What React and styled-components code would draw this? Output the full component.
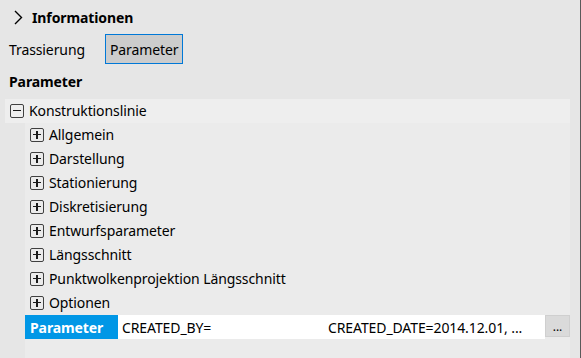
import React from 'react';
import styled, { createGlobalStyle } from 'styled-components';

const Global = createGlobalStyle`
  html, body { margin: 0; padding: 0; }
  body {
    background: #e6e6e6;
    font-family: "Noto Sans", "Open Sans", sans-serif;
    color: #000;
    letter-spacing: -0.1px;
  }
`;

const Page = styled.div`
  box-sizing: border-box;
  width: 581px;
  height: 358px;
  overflow: hidden;
  border-right: 1px solid #5a5a5a;
  display: flex;
  flex-direction: column;
`;

const Header = styled.div`
  height: 34px;
  display: flex;
  align-items: center;
  padding-left: 14px;
  gap: 9px;
  font-weight: bold;
  font-size: 14px;
`;

const Tabs = styled.div`
  height: 30px;
  display: flex;
  align-items: center;
  padding-left: 9px;
  gap: 20px;
  font-size: 14px;
`;

const Tab = styled.div`
  box-sizing: border-box;
  height: 30px;
  display: flex;
  align-items: center;
  padding: 0 ${p => (p.$active ? 4 : 0)}px;
  background: ${p => (p.$active ? '#cccccc' : 'transparent')};
  border: ${p => (p.$active ? '1px solid #0078d7' : 'none')};
`;

const Heading = styled.div`
  height: 35px;
  display: flex;
  align-items: center;
  padding-left: 9px;
  font-weight: bold;
  font-size: 14px;
`;

const Tree = styled.div`
  margin-left: 5px;
  width: 565px;
  flex: 1;
  display: flex;
  flex-direction: column;
  font-size: 14px;
`;

const Row = styled.div`
  height: 24px;
  display: flex;
  align-items: center;
  padding-left: 5px;
  gap: 5px;
  background: ${p => p.$bg || 'transparent'};
  white-space: nowrap;
  line-height: 1;
  padding-bottom: 1px;
  box-sizing: border-box;
`;

const Children = styled.div`
  margin-left: 20px;
  flex: 1;
  background: #ebebeb;
  display: flex;
  flex-direction: column;
`;

const Box = styled.span`
  box-sizing: border-box;
  width: 14px;
  height: 14px;
  border: 1px solid #404040;
  border-radius: 2px;
  position: relative;
  flex: none;
  &::before {
    content: '';
    position: absolute;
    left: 2px;
    right: 2px;
    top: 5px;
    height: 1.5px;
    background: #1a1a1a;
  }
  &::after {
    content: '';
    display: ${p => (p.$open ? 'none' : 'block')};
    position: absolute;
    top: 2px;
    bottom: 2px;
    left: 5px;
    width: 1.5px;
    background: #1a1a1a;
  }
`;

const PropRow = styled.div`
  height: 24px;
  display: flex;
  white-space: nowrap;
`;

const PropLabel = styled.div`
  width: 93px;
  background: #0097e6;
  color: #fff;
  font-weight: bold;
  display: flex;
  align-items: center;
  padding-left: 5px;
  box-sizing: border-box;
`;

const PropValue = styled.div`
  width: 427px;
  background: #fff;
  display: flex;
  align-items: center;
  padding-left: 4px;
  box-sizing: border-box;
  overflow: hidden;
`;

const ValuePart = styled.span`
  width: ${p => p.$w}px;
  flex: none;
`;

const DotsButton = styled.div`
  box-sizing: border-box;
  width: 25px;
  height: 22px;
  background: #dadada;
  border: 1px solid #cfcfcf;
  display: flex;
  align-items: center;
  justify-content: center;
  font-size: 12px;
`;

const Chevron = () => (
  <svg width="9" height="15" viewBox="0 0 9 15">
    <path d="M1 1 L7.5 7.5 L1 14" fill="none" stroke="#000" strokeWidth="1.4" />
  </svg>
);

const groups = [
  'Allgemein',
  'Darstellung',
  'Stationierung',
  'Diskretisierung',
  'Entwurfsparameter',
  'Längsschnitt',
  'Punktwolkenprojektion Längsschnitt',
  'Optionen',
];

export default function App() {
  return (
    <Page>
      <Global />
      <Header>
        <Chevron />
        Informationen
      </Header>
      <Tabs>
        <Tab>Trassierung</Tab>
        <Tab $active>Parameter</Tab>
      </Tabs>
      <Heading>Parameter</Heading>
      <Tree>
        <Row $bg="#eeeeee">
          <Box $open />
          Konstruktionslinie
        </Row>
        <Children>
          {groups.map(g => (
            <Row key={g}>
              <Box />
              {g}
            </Row>
          ))}
          <PropRow>
            <PropLabel>Parameter</PropLabel>
            <PropValue>
              <ValuePart $w={206}>CREATED_BY=</ValuePart>
              <ValuePart $w={220}>CREATED_DATE=2014.12.01, ...</ValuePart>
            </PropValue>
            <DotsButton>...</DotsButton>
          </PropRow>
        </Children>
      </Tree>
    </Page>
  );
}
